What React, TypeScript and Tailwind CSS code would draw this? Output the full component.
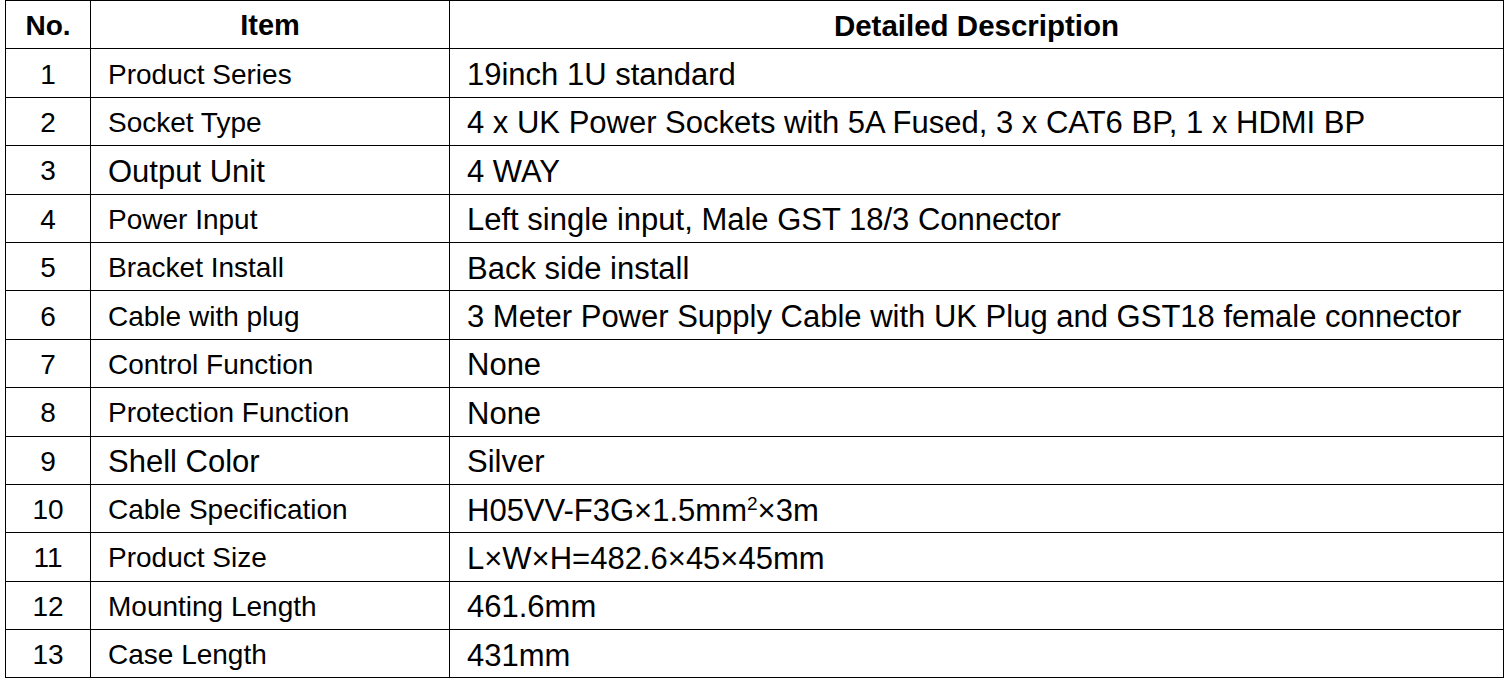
import type { ReactNode } from 'react';

type Row = { no: number; item: string; big?: boolean; desc: ReactNode };

const ROWS: Row[] = [
  { no: 1, item: 'Product Series', desc: '19inch 1U standard' },
  { no: 2, item: 'Socket Type', desc: '4 x UK Power Sockets with 5A Fused, 3 x CAT6 BP, 1 x HDMI BP' },
  { no: 3, item: 'Output Unit', big: true, desc: '4 WAY' },
  { no: 4, item: 'Power Input', desc: 'Left single input, Male GST 18/3 Connector' },
  { no: 5, item: 'Bracket Install', desc: 'Back side install' },
  { no: 6, item: 'Cable with plug', desc: '3 Meter Power Supply Cable with UK Plug and GST18 female connector' },
  { no: 7, item: 'Control Function', desc: 'None' },
  { no: 8, item: 'Protection Function', desc: 'None' },
  { no: 9, item: 'Shell Color', big: true, desc: 'Silver' },
  {
    no: 10,
    item: 'Cable Specification',
    desc: (
      <>
        H05VV-F3G×1.5mm<sup className="text-[19px] relative -top-[11px]">2</sup>×3m
      </>
    ),
  },
  { no: 11, item: 'Product Size', desc: 'L×W×H=482.6×45×45mm' },
  { no: 12, item: 'Mounting Length', desc: '461.6mm' },
  { no: 13, item: 'Case Length', desc: '431mm' },
];

export default function App() {
  return (
    <div className="min-h-screen bg-white pl-[5px] font-['Liberation_Sans',Arial,sans-serif] text-black">
      <table className="table-fixed border-collapse w-[1499px]">
        <colgroup>
          <col className="w-[85px]" />
          <col className="w-[359px]" />
          <col />
        </colgroup>
        <thead>
          <tr className="h-[48.4px]">
            <th className="border border-black pt-[2px] text-center text-[28px] font-bold leading-none">No.</th>
            <th className="border border-black pt-[2px] text-center text-[29px] font-bold leading-none">Item</th>
            <th className="border border-black pt-[2px] text-center text-[29.5px] font-bold leading-none">Detailed Description</th>
          </tr>
        </thead>
        <tbody>
          {ROWS.map((r) => (
            <tr key={r.no} className="h-[48.4px]">
              <td className="border border-black pt-[3px] text-center text-[28px] leading-none">{r.no}</td>
              <td className={`border border-black pt-[3px] pl-[17px] leading-none whitespace-nowrap ${r.big ? 'text-[31px]' : 'text-[28px]'}`}>
                {r.item}
              </td>
              <td className="border border-black pt-[3px] pl-[17px] text-[31px] leading-none whitespace-nowrap">{r.desc}</td>
            </tr>
          ))}
        </tbody>
      </table>
    </div>
  );
}
